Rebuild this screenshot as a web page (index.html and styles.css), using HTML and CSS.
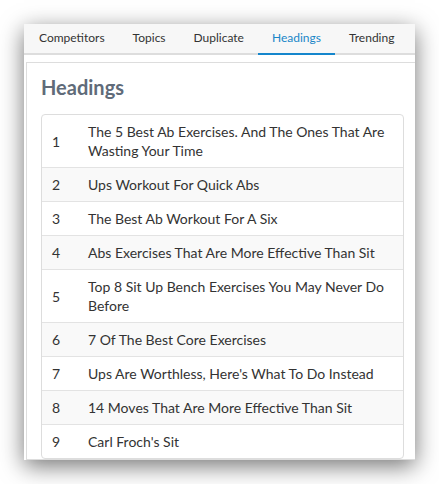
FILE: index.html
```html
<!DOCTYPE html>
<html lang="en">
<head>
    <meta charset="UTF-8">
    <meta name="viewport" content="width=device-width, initial-scale=1.0">
    <title>Headings</title>
    <link rel="stylesheet" href="styles.css">
</head>
<body>
    <div class="window">
        <!-- tab bar -->
        <div class="tabs">
            <div class="tab">Competitors</div>
            <div class="tab">Topics</div>
            <div class="tab">Duplicate</div>
            <div class="tab active">Headings</div>
            <div class="tab">Trending</div>
        </div>

        <div class="panel">
            <h2 class="title">Headings</h2>
            <table class="list">
                <tr><td class="num">1</td><td>The 5 Best Ab Exercises. And The Ones That Are Wasting Your Time</td></tr>
                <tr><td class="num">2</td><td>Ups Workout For Quick Abs</td></tr>
                <tr><td class="num">3</td><td>The Best Ab Workout For A Six</td></tr>
                <tr><td class="num">4</td><td>Abs Exercises That Are More Effective Than Sit</td></tr>
                <tr><td class="num">5</td><td>Top 8 Sit Up Bench Exercises You May Never Do Before</td></tr>
                <tr><td class="num">6</td><td>7 Of The Best Core Exercises</td></tr>
                <tr><td class="num">7</td><td>Ups Are Worthless, Here's What To Do Instead</td></tr>
                <tr><td class="num">8</td><td>14 Moves That Are More Effective Than Sit</td></tr>
                <tr><td class="num">9</td><td>Carl Froch's Sit</td></tr>
            </table>
        </div>
    </div>
</body>
</html>
```

FILE: styles.css
```css
body {
    font-family: Lato, "Open Sans", sans-serif;
    margin: 0;
    padding: 24px;
    background-color: #ffffff;
    color: #333;
}

.window {
    width: 391px;
    height: 436px;
    overflow: hidden;
    background-color: #ffffff;
    box-shadow: 0 6px 22px rgba(0, 0, 0, 0.55);
}

.tabs {
    display: flex;
    padding-left: 1px;
    background-color: #f7f7f7;
    border-bottom: 2px solid #dddddd;
    height: 29px;
}

.tab {
    padding: 0 14px;
    font-size: 12px;
    line-height: 27px;
    color: #333;
    white-space: nowrap;
    border-bottom: 2px solid transparent;
    margin-bottom: -2px;
}

.tab.active {
    color: #1a86c8;
    border-bottom-color: #1586cc;
}

.panel {
    margin: 7px 0 0 2px;
    width: 377px;
    padding: 0 14px;
    border: 1px solid #dddddd;
    border-right: none;
}

.title {
    margin: 0;
    padding: 13px 0 16px;
    font-size: 20px;
    line-height: 22px;
    font-weight: 700;
    color: #606b79;
}

.list {
    width: 363px;
    border-collapse: separate;
    border-spacing: 0;
    border: 1px solid #dddddd;
    border-radius: 4px;
    font-size: 14px;
    line-height: 19px;
}

.list td {
    padding: 7px 10px;
    border-top: 1px solid #e3e3e3;
    vertical-align: middle;
}

.list tr:first-child td {
    border-top: none;
}

.list tr:nth-child(even) td {
    background-color: #f9f9f9;
}

.list td.num {
    width: 16px;
    padding-right: 10px;
}
```
